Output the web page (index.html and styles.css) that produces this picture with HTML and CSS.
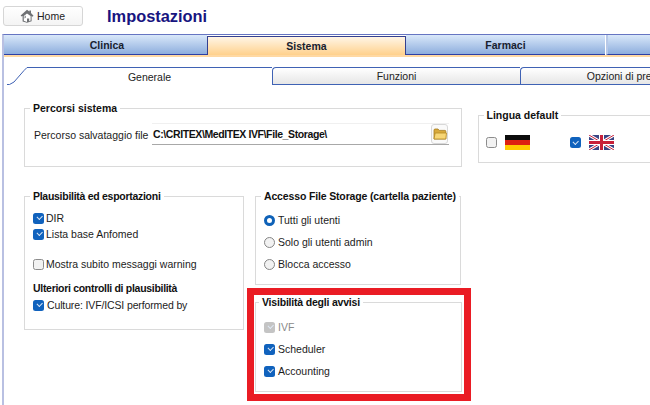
FILE: index.html
```html
<!DOCTYPE html>
<html lang="it">
<head>
<meta charset="utf-8">
<title>Impostazioni</title>
<link rel="stylesheet" href="styles.css">
</head>
<body>
<header class="topbar">
  <button class="home">
    <svg class="home-icon" width="14" height="14" viewBox="0 0 14 14"><path d="M7 .8 .6 6.600l1.200 1L2.600 7v5.400l4.400 1.400 4.600-1.600V7l.9.7 1-1L11 4V1.400H9.400v1.200z" fill="#6f7174"/><path d="M7 4.400 3.800 7v4.800L7 13V9.400h2.200v2.800l1.400-.6V7z" fill="#fff"/><path d="M4.400 7.400 6 6.600v2.200l-1.600.6z" fill="#9a9c9f"/></svg>
    <span>Home</span>
  </button>
  <h1 class="title">Impostazioni</h1>
</header>
<main class="panel">
  <nav class="maintabs">
    <div class="mtab">Clinica</div>
    <div class="mtab active">Sistema</div>
    <div class="mtab">Farmaci</div>
    <div class="mtab rest"></div>
  </nav>
  <div class="strip"></div>
  <nav class="subtabs">
    <svg class="slope" width="22" height="18" viewBox="0 0 22 18"><path d="M0 17.500h2.500L7 15 17 3.500 20 .5h2" fill="none" stroke="#3f62b4"/></svg>
    <div class="stab active">Generale</div>
    <div class="stab">Funzioni</div>
    <div class="stab last">Opzioni di prenotazione</div>
  </nav>
  <div class="content">
    <div class="row-top">
      <fieldset class="group paths">
        <legend>Percorsi sistema</legend>
        <div class="path-row">
          <label class="path-label">Percorso salvataggio file</label>
          <div class="path-input">
            <span class="path-value">C:\CRITEX\MedITEX IVF\File_Storage\</span>
            <button class="folder">
              <svg width="14" height="12" viewBox="0 0 14 12"><path d="M1 11V2.200C1 1.500 1.400 1 2 1h3l1.200 1.400H12c.5 0 .8.300.8.800V11z" fill="#d8a93a" stroke="#a67c1e" stroke-width=".8"/><path d="M1 11l1.200-6h11.300L12.800 11z" fill="#f7d675" stroke="#b58a24" stroke-width=".8"/></svg>
            </button>
          </div>
        </div>
      </fieldset>
      <fieldset class="group lang">
        <legend>Lingua default</legend>
        <div class="lang-row">
          <div class="lang-item">
            <span class="cb off"></span>
            <svg class="flag" width="25" height="15" viewBox="0 0 25 15"><rect width="25" height="5" fill="#0c0c0c"/><rect y="5" width="25" height="5" fill="#dd2211"/><rect y="10" width="25" height="5" fill="#ffcc00"/></svg>
          </div>
          <div class="lang-item">
            <span class="cb on"></span>
            <svg class="flag" width="25" height="15" viewBox="0 0 25 15"><rect width="25" height="15" fill="#3a4484"/><path d="M0 0 25 15M25 0 0 15" stroke="#fff" stroke-width="3"/><path d="M0 0 25 15M25 0 0 15" stroke="#c8213a" stroke-width="1"/><path d="M12.500 0v15M0 7.500h25" stroke="#fff" stroke-width="5"/><path d="M12.500 0v15M0 7.500h25" stroke="#c8213a" stroke-width="3"/></svg>
          </div>
        </div>
      </fieldset>
    </div>
    <div class="row-bottom">
      <fieldset class="group plaus">
        <legend>Plausibilità ed esportazioni</legend>
        <div class="opt tight"><span class="cb on"></span>DIR</div>
        <div class="opt tight"><span class="cb on"></span>Lista base Anfomed</div>
        <div class="opt warn"><span class="cb off"></span>Mostra subito messaggi warning</div>
        <div class="subhead">Ulteriori controlli di plausibilità</div>
        <div class="opt culture"><span class="cb on"></span>Culture: IVF/ICSI performed by</div>
      </fieldset>
      <div class="col-right">
        <fieldset class="group access">
          <legend>Accesso File Storage (cartella paziente)</legend>
          <div class="opt wide"><span class="rd on"></span>Tutti gli utenti</div>
          <div class="opt wide"><span class="rd"></span>Solo gli utenti admin</div>
          <div class="opt wide"><span class="rd"></span>Blocca accesso</div>
        </fieldset>
        <div class="highlight">
          <fieldset class="group notices">
            <legend>Visibilità degli avvisi</legend>
            <div class="opt wide disabled"><span class="cb dis"></span>IVF</div>
            <div class="opt wide"><span class="cb on"></span>Scheduler</div>
            <div class="opt wide"><span class="cb on"></span>Accounting</div>
          </fieldset>
        </div>
      </div>
    </div>
  </div>
</main>
</body>
</html>
```
FILE: styles.css
```css
* { box-sizing: border-box; }
html, body { margin: 0; height: 405px; overflow: hidden; background: #fff; }
body { font-family: "Liberation Sans", Arial, sans-serif; font-size: 10.5px; color: #1c1c1c; }

.topbar { display: flex; align-items: center; height: 34px; padding: 0 0 2px 3px; }
.home { display: flex; align-items: center; justify-content: flex-start; gap: 3px; width: 80px; height: 20px; padding: 0 0 1px 16px; font: 10.5px "Liberation Sans", Arial, sans-serif; color: #222; background: linear-gradient(#fff, #f4f4f4); border: 1px solid #d6d6d6; border-radius: 3px; }
.home-icon { flex: none; }
.title { margin: 0 0 0 24px; font-size: 16.400px; font-weight: bold; color: #171480; }

.panel { margin-left: 2px; height: 371px; border-left: 2px solid #b9c0e2; border-top: 1px solid #6675c2; overflow: hidden; }
.maintabs { display: flex; height: 20px; }
.mtab { flex: none; width: 199px; display: flex; align-items: center; justify-content: center; font-weight: bold; color: #17212f; background: linear-gradient(#d9e8fa, #8eaedd); border-bottom: 1px solid #2b3fa6; }
.mtab:first-child { width: 203px; padding-left: 3px; }
.mtab.active { background: linear-gradient(#fff5e6, #ffd18c); border: 1px solid #34408f; border-bottom: 0; margin-top: 1px; height: 19px; }
.mtab.rest { width: 60px; border-left: 2px solid #b6c8e8; margin-left: 1px; }
.strip { height: 2px; background: #ffd9a3; }
.subtabs { display: flex; height: 18px; margin: 10px 0 0 3px; width: 800px; }
.slope { flex: none; }
.stab { flex: none; width: 248px; display: flex; align-items: center; justify-content: center; border: 1px solid #3f62b4; border-right: 0; border-top-left-radius: 4px; background: linear-gradient(#fff, #e6e6e6); color: #222; }
.stab.active { width: 243px; padding-right: 2px; background: #fff; border-width: 1px 0 0; border-radius: 0; }
.stab.last { width: 243px; }

.content { padding-left: 20px; }
.group { margin: 0; padding: 0; min-width: 0; border: 1px solid #dadada; }
.group legend { margin-left: 5px; padding: 0 3px; height: 14px; line-height: 14px; font-weight: bold; color: #111; white-space: nowrap; }

.row-top { display: flex; align-items: flex-start; gap: 16px; margin-top: 16px; }
.paths { flex: none; width: 437.500px; height: 66px; }
.path-row { display: flex; align-items: center; height: 21px; margin-top: 9px; padding-left: 9px; }
.path-label { flex: none; width: 118px; }
.path-input { flex: none; display: flex; align-items: center; justify-content: space-between; width: 297px; height: 21px; padding-left: 1px; background: #fff; border-bottom: 1px solid #a8a8a8; box-shadow: 0 -1px 0 #f0f0f0; font-weight: bold; letter-spacing: -0.4px; color: #111; }
.folder { display: flex; align-items: center; justify-content: center; width: 17px; height: 20px; margin-right: 1px; padding: 0; background: #fafafa; border: 1px solid #d8d8d8; border-radius: 3px; }

.lang { flex: none; width: 200px; height: 55px; margin-top: 7px; }
.lang-row { display: flex; gap: 40px; margin-top: 13px; padding-left: 7px; }
.lang-item { flex: none; display: flex; align-items: center; gap: 8px; }
.lang-item .cb { margin-right: 0; }
.flag { flex: none; }

.row-bottom { display: flex; align-items: flex-start; gap: 11px; margin-top: 22px; }
.plaus { flex: none; width: 220px; height: 141px; }
.plaus legend { letter-spacing: -0.28px; }
.notices legend { letter-spacing: -0.2px; }
.access legend { letter-spacing: -0.15px; }
.opt { display: flex; align-items: center; padding-left: 8px; height: 16px; }
.opt.tight:first-of-type { margin-top: 7px; }
.opt.warn { margin-top: 14px; }
.subhead { margin-top: 9px; padding-left: 8px; height: 14px; line-height: 14px; font-weight: bold; letter-spacing: -0.3px; color: #111; }
.opt.culture { margin-top: 2px; padding-left: 8px; letter-spacing: -0.13px; }
.opt.culture .cb { margin-right: 3px; }

.col-right { flex: none; width: 206px; display: flex; flex-direction: column; gap: 3px; }
.access { height: 96px; }
.access .wide:first-of-type { margin-top: 6px; }
.notices { height: 97px; }
.notices legend { margin-left: 3px; }
.notices .wide:first-of-type { margin-top: 7px; }
.opt.wide { height: 22px; }
.opt.wide .cb, .opt.wide .rd { margin-right: 3px; }
.opt.disabled { color: #8a8a8a; }
.highlight { width: 224px; margin-left: -8px; padding: 0 2px 2px 1px; background: #fff; border: 7px solid #ea1c24; }

.cb, .rd { flex: none; position: relative; display: block; width: 11px; height: 11px; margin-right: 2px; }
.cb { border-radius: 2.500px; }
.cb.on { background: #1062bd; }
.cb.off { background: #f2f2f2; border: 1px solid #8c8c8c; }
.cb.dis { background: #c4c4c4; }
.cb.on::after, .cb.dis::after { content: ""; position: absolute; left: 3.500px; top: 2.500px; width: 4px; height: 2.500px; border-left: 1px solid #dfe9f6; border-bottom: 1px solid #dfe9f6; transform: rotate(-45deg); }
.rd { border-radius: 50%; background: #f2f2f2; border: 1px solid #858585; }
.rd.on { background: #fff; border: 3.500px solid #0f62b8; }
```
